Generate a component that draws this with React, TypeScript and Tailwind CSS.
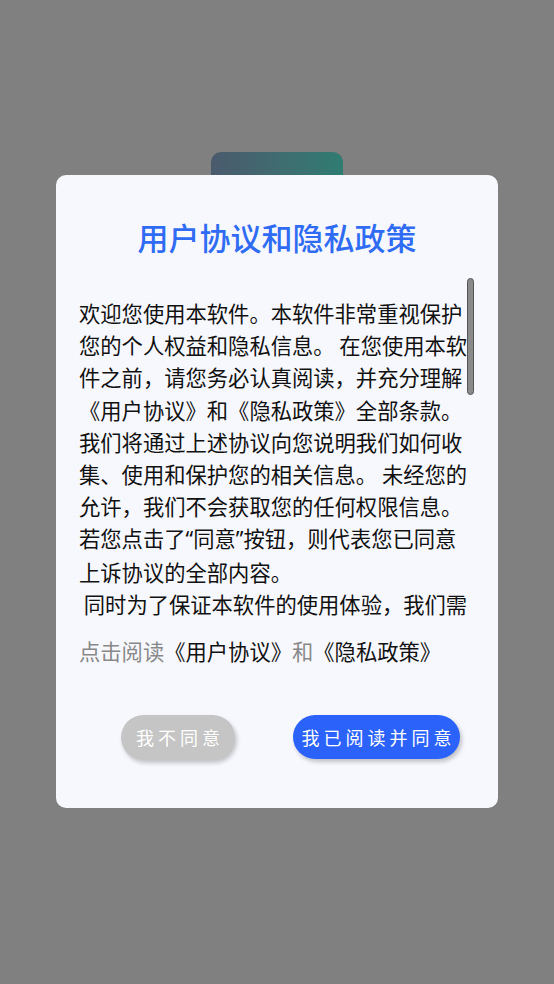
import React from "react";

const q = (c: string) => (
  <span style={{ fontFamily: '"Noto Sans", sans-serif' }}>{c}</span>
);

export default function App() {
  return (
    <div
      className="relative min-h-[984px] w-full overflow-hidden bg-[#808080]"
      style={{ fontFamily: '"Noto Sans CJK SC", "Noto Sans", sans-serif' }}
    >
      <div className="mx-auto mt-[152px] h-[120px] w-[132px] rounded-t-[10px] bg-gradient-to-r from-[#4a5a6d] to-[#2e7c72]" />

      <div className="absolute left-[56px] top-[175px] flex w-[442px] flex-col rounded-[10px] bg-[#f7f8fd] px-[23px] pb-[48px]">
        <h1 className="mt-[42px] text-center text-[31px] font-medium leading-[40px] text-[#2f6cf3]">
          用户协议和隐私政策
        </h1>

        <div className="relative mt-[21px] h-[342px] w-[397px] overflow-hidden pt-[19px]">
          <p className="w-[390px] whitespace-pre-wrap text-[21.3px] leading-[32.2px] text-[#111]">
            {"欢迎您使用本软件。本软件非常重视保护您的个人权益和隐私信息。 在您使用本软件之前，请您务必认真阅读，并充分理解《用户协议》和《隐私政策》全部条款。我们将通过上述协议向您说明我们如何收集、使用和保护您的相关信息。 未经您的允许，我们不会获取您的任何权限信息。若您点击了"}
            {q("“")}
            {"同意"}
            {q("”")}
            {"按钮，则代表您已同意上诉协议的全部内容。\n 同时为了保证本软件的使用体验，我们需要获取您设备的部分权限，包括存储权限、网络权限等，您可以在系统设置中随时关闭这些权限。\n 如您对以上协议内容有任何疑问，请联系我们的客服人员，我们将尽快为您解答。"}
          </p>
          <div className="absolute right-[2px] top-0 h-[117px] w-[7px] rounded-full border border-[#555] bg-[#8a8a8a]" />
        </div>

        <p className="mt-[15px] text-[21.3px] leading-[32px] text-[#888]">
          点击阅读<span className="text-[#111]">《用户协议》</span>和
          <span className="text-[#111]">《隐私政策》</span>
        </p>

        <div className="mt-[48px] flex gap-[58px] pl-[42px]">
          <button className="flex h-[45px] w-[114px] items-center justify-center rounded-full bg-[#c5c5c5] pl-[4px] text-[18px] tracking-[4px] text-white shadow-[2px_3px_4px_rgba(0,0,0,0.22)]">
            我不同意
          </button>
          <button className="flex h-[44px] w-[167px] items-center justify-center rounded-full bg-[#2b63fa] pl-[4px] text-[18px] tracking-[4px] text-white shadow-[2px_3px_4px_rgba(0,0,0,0.22)]">
            我已阅读并同意
          </button>
        </div>
      </div>
    </div>
  );
}
